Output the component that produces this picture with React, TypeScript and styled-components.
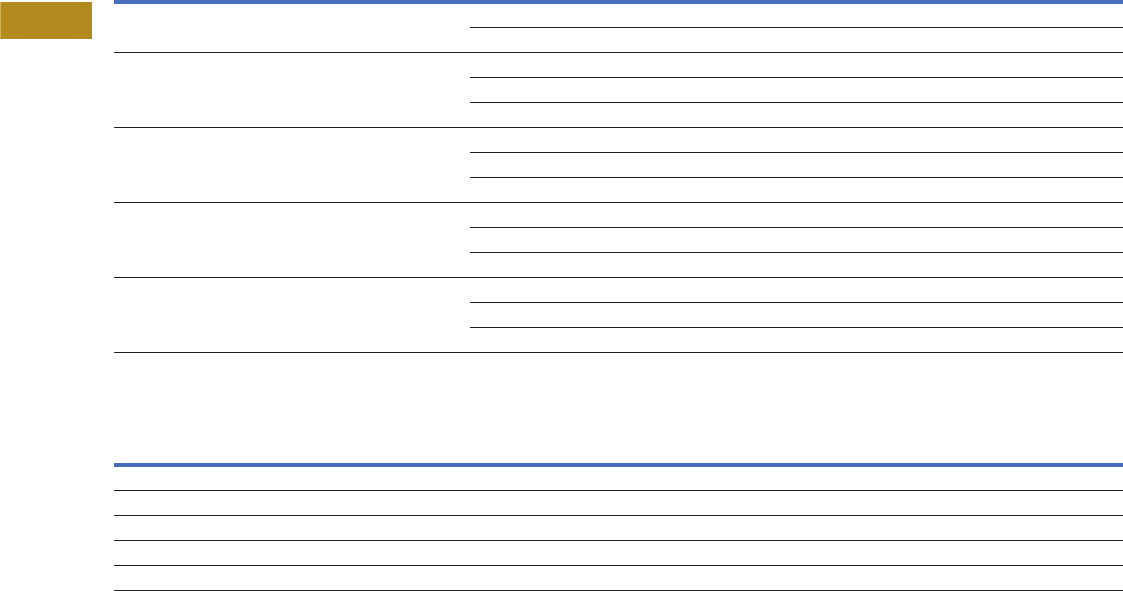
import React from "react";
import styled, { createGlobalStyle } from "styled-components";

const Global = createGlobalStyle`
  html, body {
    margin: 0;
    padding: 0;
    background: #ffffff;
    font-family: "Liberation Sans", Arial, sans-serif;
  }
  #root { width: 100%; }
`;

const Page = styled.div`
  display: grid;
  grid-template-columns: 92px 1fr;
  column-gap: 22px;
  align-items: start;
  width: 100%;
`;

const Marker = styled.div`
  margin-top: 2px;
  height: 37px;
  background: #b38a1e;
  border-left: 1px solid #cdb06a;
  box-sizing: border-box;
`;

const Content = styled.div`
  display: flex;
  flex-direction: column;
  gap: 110px;
  min-width: 0;
`;

const Table = styled.div`
  border-top: 4px solid #4a6cbd;
  display: flex;
  flex-direction: column;
`;

const Group = styled.div`
  display: grid;
  grid-template-columns: 356px 1fr;
  border-bottom: 1px solid #231f20;
`;

const GroupLabel = styled.div`
  grid-column: 1;
  grid-row: 1 / span ${(p: { $rows: number }) => p.$rows};
`;

const SubRow = styled.div<{ $first?: boolean; $last?: boolean }>`
  grid-column: 2;
  height: ${(p) => (p.$first ? 23 : 24)}px;
  border-bottom: ${(p) => (p.$last ? "none" : "1px solid #231f20")};
`;

const Row = styled.div<{ $first?: boolean }>`
  height: ${(p) => (p.$first ? 23 : 24)}px;
  border-bottom: 1px solid #231f20;
`;

const groups = [2, 3, 3, 3, 3];

export default function App() {
  return (
    <>
      <Global />
      <Page>
        <Marker />
        <Content>
          <Table>
            {groups.map((n, gi) => (
              <Group key={gi}>
                <GroupLabel $rows={n} />
                {Array.from({ length: n }).map((_, ri) => (
                  <SubRow
                    key={ri}
                    $first={gi === 0 && ri === 0}
                    $last={ri === n - 1}
                  />
                ))}
              </Group>
            ))}
          </Table>
          <Table>
            {[0, 1, 2, 3, 4].map((i) => (
              <Row key={i} $first={i === 0} />
            ))}
          </Table>
        </Content>
      </Page>
    </>
  );
}
